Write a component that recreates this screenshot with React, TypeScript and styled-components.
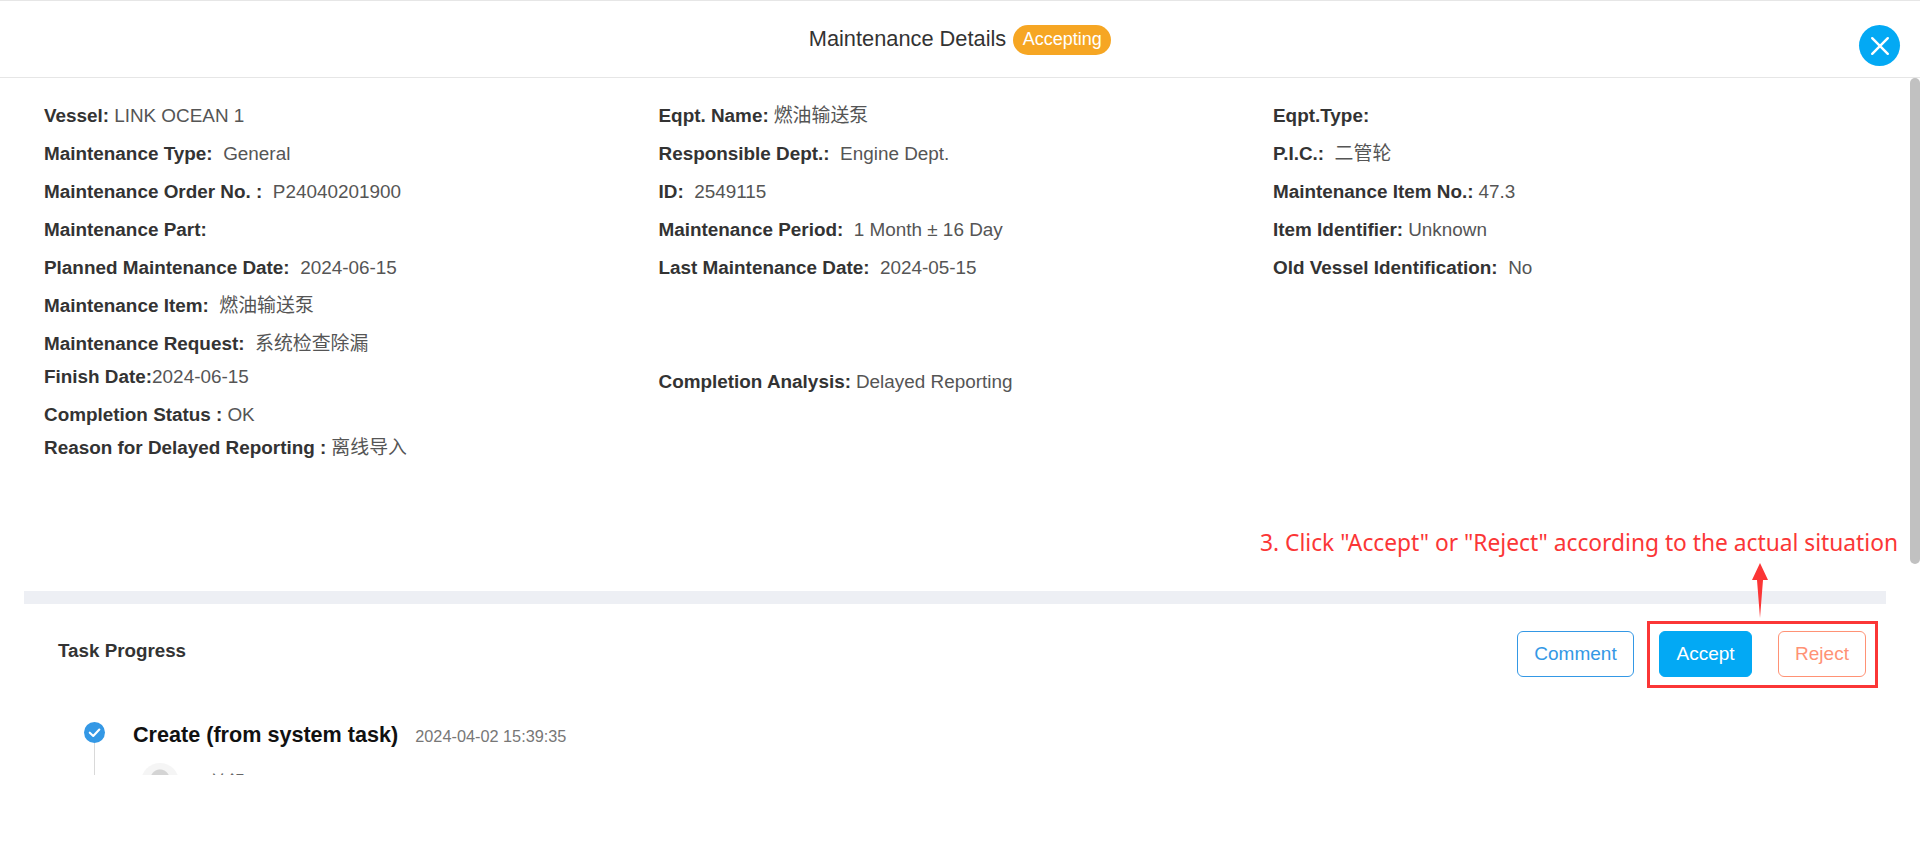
import React from 'react';
import styled, { createGlobalStyle } from 'styled-components';

const GlobalStyle = createGlobalStyle`
  html, body {
    margin: 0;
    padding: 0;
    background: #fff;
    overflow: hidden;
  }
  body {
    font-family: "Liberation Sans", "Noto Sans CJK SC", sans-serif;
    color: #333;
  }
`;

type Field = { label: string; value?: string; wide?: boolean };

const columnOne: Field[] = [
  { label: 'Vessel:', value: 'LINK OCEAN 1' },
  { label: 'Maintenance Type:', value: 'General', wide: true },
  { label: 'Maintenance Order No. :', value: 'P24040201900', wide: true },
  { label: 'Maintenance Part:' },
  { label: 'Planned Maintenance Date:', value: '2024-06-15', wide: true },
  { label: 'Maintenance Item:', value: '燃油输送泵', wide: true },
  { label: 'Maintenance Request:', value: '系统检查除漏', wide: true },
];

const columnTwo: Field[] = [
  { label: 'Eqpt. Name:', value: '燃油输送泵' },
  { label: 'Responsible Dept.:', value: 'Engine Dept.', wide: true },
  { label: 'ID:', value: '2549115', wide: true },
  { label: 'Maintenance Period:', value: '1 Month ± 16 Day', wide: true },
  { label: 'Last Maintenance Date:', value: '2024-05-15', wide: true },
];

const columnThree: Field[] = [
  { label: 'Eqpt.Type:' },
  { label: 'P.I.C.:', value: '二管轮', wide: true },
  { label: 'Maintenance Item No.:', value: '47.3' },
  { label: 'Item Identifier:', value: 'Unknown' },
  { label: 'Old Vessel Identification:', value: 'No', wide: true },
];

const FieldRow = ({ field }: { field: Field }) => (
  <Row>
    <Label>{field.label}</Label>
    {field.value && <Value $gap={field.wide ? 10.5 : 5}>{field.value}</Value>}
  </Row>
);

const App = () => {
  return (
    <Page>
      <GlobalStyle />
      <Modal>
        <Header>
          <Title>Maintenance Details</Title>
          <Badge>Accepting</Badge>
          <CloseButton aria-label="close">
            <svg width="20" height="20" viewBox="0 0 20 20" fill="none">
              <path d="M2.2 2.2L17.8 17.8M17.8 2.2L2.2 17.8" stroke="#fff" strokeWidth="2.4" strokeLinecap="round" />
            </svg>
          </CloseButton>
        </Header>
        <Body>
          <Scrollbar />
          <InfoGrid>
            <Column>
              {columnOne.map((f) => (
                <FieldRow key={f.label} field={f} />
              ))}
            </Column>
            <Column>
              {columnTwo.map((f) => (
                <FieldRow key={f.label} field={f} />
              ))}
            </Column>
            <Column>
              {columnThree.map((f) => (
                <FieldRow key={f.label} field={f} />
              ))}
            </Column>
          </InfoGrid>
          <FinishGrid>
            <Column>
              <FinishRow $h={28}>
                <Label>Finish Date:</Label>
                <Value $gap={0}>2024-06-15</Value>
              </FinishRow>
              <Row $h={38}>
                <Label>Completion Status :</Label>
                <Value $gap={5}>OK</Value>
              </Row>
              <Row $h={28}>
                <Label>Reason for Delayed Reporting :</Label>
                <Value $gap={5}>离线导入</Value>
              </Row>
            </Column>
            <AnalysisColumn>
              <Row $h={33}>
                <Label>Completion Analysis:</Label>
                <Value $gap={5}>Delayed Reporting</Value>
              </Row>
            </AnalysisColumn>
          </FinishGrid>
          <Divider />
          <Progress>
            <ProgressHead>
              <ProgressTitle>Task Progress</ProgressTitle>
              <Actions>
                <ActionButton $kind="comment">Comment</ActionButton>
                <ActionButton $kind="accept">Accept</ActionButton>
                <ActionButton $kind="reject">Reject</ActionButton>
              </Actions>
            </ProgressHead>
            <Step>
              <StepRail>
                <StepDot>
                  <svg width="21" height="21" viewBox="0 0 20 20" fill="none">
                    <path d="M5.5 10.2L8.8 13.3L14.6 7.2" stroke="#fff" strokeWidth="2" strokeLinecap="round" strokeLinejoin="round" />
                  </svg>
                </StepDot>
                <StepLine />
              </StepRail>
              <StepBody>
                <StepHead>
                  <StepTitle>Create (from system task)</StepTitle>
                  <StepTime>2024-04-02 15:39:35</StepTime>
                </StepHead>
                <Person>
                  <Avatar />
                  <PersonName>兰舒</PersonName>
                </Person>
              </StepBody>
            </Step>
          </Progress>
        </Body>
      </Modal>
      <Note>3. Click "Accept" or "Reject" according to the actual situation</Note>
      <NoteArrow width="16" height="55" viewBox="0 0 16 55">
        <path d="M8 0L16 17H11L8 55L5 17H0Z" fill="#fb3636" />
      </NoteArrow>
      <NoteBox />
    </Page>
  );
};

export default App;

const Page = styled.div`
  position: relative;
  width: 1920px;
  height: 868px;
  background: #fff;
  overflow: hidden;
`;

const Modal = styled.div`
  display: flex;
  flex-direction: column;
  height: 775px;
  overflow: hidden;
  border-top: 1px solid #e6e6e6;
  box-sizing: border-box;
`;

const Header = styled.header`
  position: relative;
  display: flex;
  flex: none;
  align-items: center;
  justify-content: center;
  gap: 7px;
  height: 77px;
  padding-bottom: 1px;
  box-sizing: border-box;
  border-bottom: 1px solid #e6e6e6;
`;

const Title = styled.h2`
  margin: 0;
  font-size: 21.8px;
  font-weight: 400;
  color: #333;
`;

const Badge = styled.span`
  display: flex;
  align-items: center;
  justify-content: center;
  width: 98px;
  height: 30px;
  margin-top: 2px;
  border-radius: 15px;
  background: #f6a623;
  color: #fff;
  font-size: 18px;
`;

const CloseButton = styled.button`
  position: absolute;
  top: 24px;
  right: 20px;
  display: flex;
  align-items: center;
  justify-content: center;
  width: 41px;
  height: 41px;
  padding: 0;
  border: none;
  border-radius: 50%;
  background: #03a9f4;
`;

const Body = styled.main`
  position: relative;
  flex: 1;
  min-height: 0;
  overflow: hidden;
`;

const Scrollbar = styled.div`
  position: absolute;
  top: 0;
  right: 0;
  width: 10px;
  height: 486px;
  border-radius: 5px;
  background: #c1c1c1;
`;

const InfoGrid = styled.section`
  display: grid;
  grid-template-columns: repeat(3, 614.5px);
  padding: 19px 0 0 44px;
`;

const Column = styled.div`
  display: flex;
  flex-direction: column;
`;

const AnalysisColumn = styled(Column)`
  padding-top: 2px;
`;

const Row = styled.div<{ $h?: number }>`
  height: ${(p) => p.$h ?? 38}px;
  line-height: ${(p) => p.$h ?? 38}px;
  font-size: 18.9px;
  white-space: nowrap;
`;

const FinishRow = styled(Row)`
  margin-bottom: 5px;
`;

const Label = styled.span`
  font-weight: 700;
  color: #333;
`;

const Value = styled.span<{ $gap: number }>`
  margin-left: ${(p) => p.$gap}px;
  color: #555;
`;

const FinishGrid = styled.section`
  display: grid;
  grid-template-columns: repeat(2, 614.5px);
  padding-left: 44px;
`;

const Divider = styled.div`
  height: 13px;
  margin: 129px 34px 0 24px;
  background: #edeff4;
`;

const Progress = styled.section`
  padding: 0 54px 0 58px;
`;

const ProgressHead = styled.div`
  display: flex;
  align-items: flex-start;
  justify-content: space-between;
  padding-top: 27px;
`;

const ProgressTitle = styled.h3`
  margin: 0;
  padding-top: 9px;
  font-size: 18.8px;
  font-weight: 700;
  color: #333;
`;

const Actions = styled.div`
  display: flex;
  gap: 25px;
`;

const buttonColors = {
  comment: 'border: 1px solid #3498e5; color: #3498e5; background: #fff;',
  accept: 'border: 1px solid #03a9f4; color: #fff; background: #03a9f4;',
  reject: 'border: 1px solid #ff9275; color: #ff9275; background: #fff; margin-left: 1px;',
};

const buttonWidths = { comment: 117, accept: 93, reject: 88 };

const ActionButton = styled.button<{ $kind: 'comment' | 'accept' | 'reject' }>`
  width: ${(p) => buttonWidths[p.$kind]}px;
  height: 46px;
  padding: 0;
  border-radius: 6px;
  font-family: inherit;
  font-size: 19px;
  ${(p) => buttonColors[p.$kind]}
`;

const Step = styled.div`
  display: flex;
  gap: 28px;
  margin: 45px 0 0 26px;
`;

const StepRail = styled.div`
  display: flex;
  flex-direction: column;
  align-items: center;
`;

const StepDot = styled.div`
  display: flex;
  flex: none;
  align-items: center;
  justify-content: center;
  width: 21px;
  height: 21px;
  border-radius: 50%;
  background: #3498e5;
`;

const StepLine = styled.div`
  width: 1px;
  height: 60px;
  background: #d9d9d9;
`;

const StepBody = styled.div`
  display: flex;
  flex-direction: column;
`;

const StepHead = styled.div`
  display: flex;
  align-items: baseline;
  gap: 17px;
`;

const StepTitle = styled.span`
  font-size: 21.6px;
  font-weight: 700;
  color: #111;
`;

const StepTime = styled.span`
  font-size: 16.3px;
  color: #777;
`;

const Person = styled.div`
  display: flex;
  align-items: flex-start;
  gap: 30px;
  margin: 15px 0 0 8px;
`;

const Avatar = styled.div`
  width: 38px;
  height: 38px;
  border-radius: 50%;
  background: radial-gradient(circle at 50% 42%, #d4d4d4 0 9px, #f5f5f5 10px);
`;

const PersonName = styled.span`
  padding-top: 5px;
  font-size: 18px;
  color: #666;
`;

const Note = styled.div`
  position: absolute;
  top: 527px;
  right: 22px;
  color: #fb3636;
  font-family: "Noto Sans", "Noto Sans CJK SC", sans-serif;
  font-size: 22.75px;
  white-space: nowrap;
`;

const NoteArrow = styled.svg`
  position: absolute;
  top: 563px;
  left: 1752px;
`;

const NoteBox = styled.div`
  position: absolute;
  top: 621px;
  left: 1647px;
  width: 231px;
  height: 67px;
  border: 3px solid #fb3636;
  box-sizing: border-box;
`;
